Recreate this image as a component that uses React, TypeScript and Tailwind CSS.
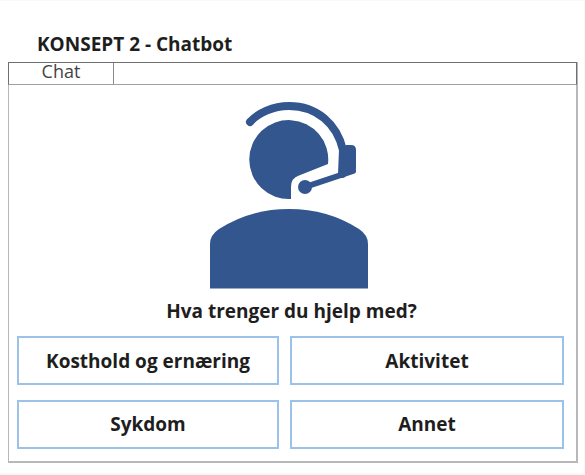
import { ReactNode } from "react";

// Headset agent drawing, coordinates taken 1:1 from the page
function AgentIcon() {
  return (
    <svg width="160" height="192" viewBox="209 99 160 192" className="mr-[6px] block">
      <path
        d="M250 122 C258 113 273 106 289 106 C317 106 337 124 343 150 L342 174"
        fill="none"
        stroke="#34568f"
        strokeWidth="8"
        strokeLinecap="round"
      />
      <path d="M346 145 H351 Q356 145 356 150 V168 Q356 172 352 173 L340 177 Z" fill="#34568f" />
      <path d="M305 187 L353 171" fill="none" stroke="#34568f" strokeWidth="6" strokeLinecap="round" />
      <circle cx="305" cy="187" r="7" fill="#34568f" />
      <path
        d="M328 164 A39.5 39.5 0 1 0 291 199 V187 Q291 178 299 175.5 Z"
        fill="#34568f"
      />
      <path
        d="M210 288.5 V244 Q210 235 219 229 Q250 209 289 209 Q328 209 359 229 Q368 235 368 244 V288.5 Z"
        fill="#34568f"
      />
    </svg>
  );
}

function Choice({ children, top }: { children: ReactNode; top?: boolean }) {
  return (
    <button
      className={
        top
          ? "h-[49px] border-2 border-[#9cc2ea] bg-white pt-[2px] text-[19px] font-bold text-[#1e1e1e]"
          : "h-[49px] border-2 border-[#9cc2ea] bg-white text-[19px] font-bold text-[#1e1e1e]"
      }
    >
      {children}
    </button>
  );
}

export default function App() {
  return (
    <div className="h-[475px] w-[585px] border-t border-r border-b-2 border-[#f8f8f8] bg-white pl-2 pt-[30px] font-['Open_Sans',sans-serif]">
      <h1 className="h-[31px] pl-[29px] text-[19px] font-bold leading-[27px] text-[#1e1e1e]">KONSEPT 2 - Chatbot</h1>

      <div className="h-[401px] w-[570px] border-b-2 border-r-2 border-l border-[#b8b8b8] bg-white">
        {/* Tab row */}
        <div className="-ml-px -mr-px flex h-[23px] border border-[#707070] border-b-[#a0a0a0]">
          <div className="w-[105px] border-r border-[#8a8a8a] text-center text-[18px] leading-[16px] text-[#444444]">
            Chat
          </div>
        </div>

        <div className="flex flex-col items-center pr-[2px] pt-[14px]">
          <AgentIcon />
          <p className="mt-[7px] text-[19px] font-bold leading-[27px] text-[#1e1e1e]">Hva trenger du hjelp med?</p>
        </div>

        <div className="mt-[11px] grid grid-cols-[262px_274px] gap-x-[11px] gap-y-[15px] pl-2">
          <Choice top>Kosthold og ernæring</Choice>
          <Choice top>Aktivitet</Choice>
          <Choice>Sykdom</Choice>
          <Choice>Annet</Choice>
        </div>
      </div>
    </div>
  );
}
